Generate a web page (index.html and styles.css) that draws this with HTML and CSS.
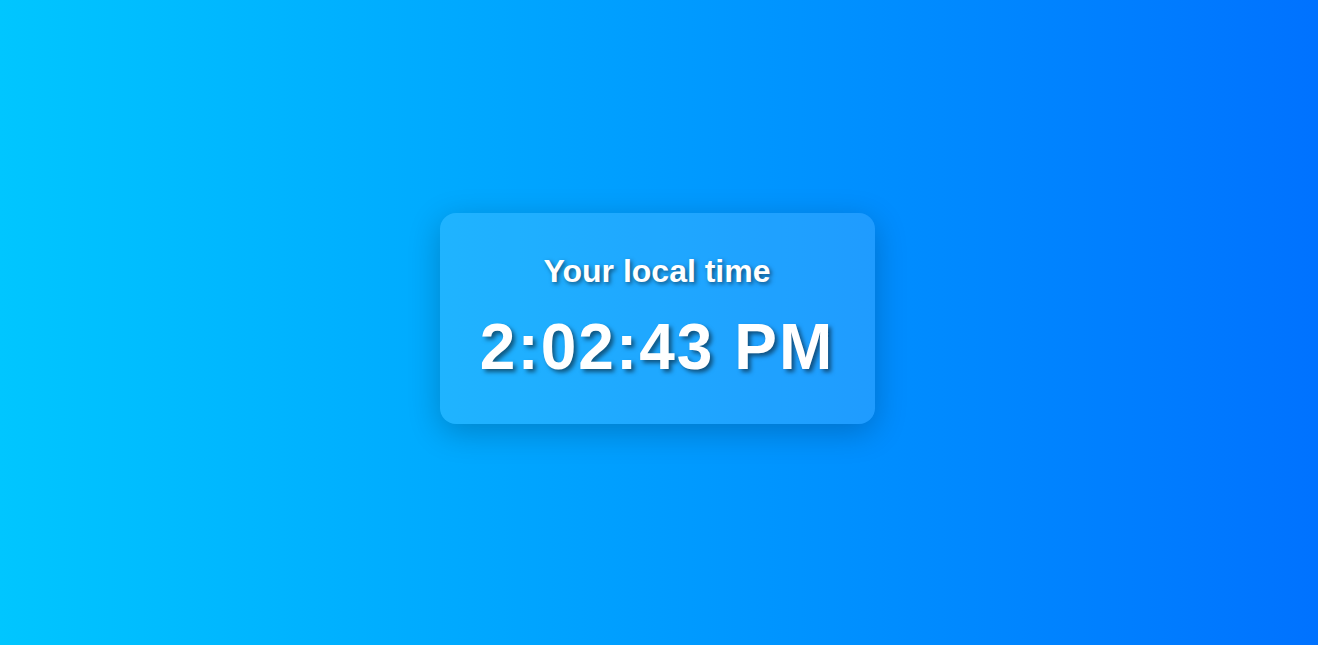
FILE: index.html
```html
<!DOCTYPE html>
<html lang="en">
<head>
<meta charset="utf-8">
<title>Local Time</title>
<link rel="stylesheet" href="styles.css">
</head>
<body>
<main class="card">
  <h1 class="title">Your local time</h1>
  <div class="time">2:02:43 PM</div>
</main>
</body>
</html>
```

FILE: styles.css
```css
html, body {
  height: 100%;
}
body {
  margin: 0;
  font-family: "Liberation Sans", Arial, sans-serif;
  background: linear-gradient(to right, #00c6ff, #0072ff);
  display: flex;
  align-items: center;
  justify-content: center;
  color: #fff;
}
.card {
  width: 435px;
  box-sizing: border-box;
  padding: 40px 20px;
  border-radius: 16px;
  background: rgba(255, 255, 255, 0.12);
  box-shadow: 0 8px 32px rgba(0, 0, 0, 0.22);
  text-align: center;
  margin: -9px 4px 0 0;
}
.title {
  margin: 0 0 20px;
  font-size: 32px;
  font-weight: bold;
  text-shadow: 2px 2px 4px rgba(0, 0, 0, 0.5);
}
.time {
  font-size: 64px;
  font-weight: bold;
  letter-spacing: 2px;
  text-shadow: 3px 3px 4px rgba(0, 0, 0, 0.5);
}
```
